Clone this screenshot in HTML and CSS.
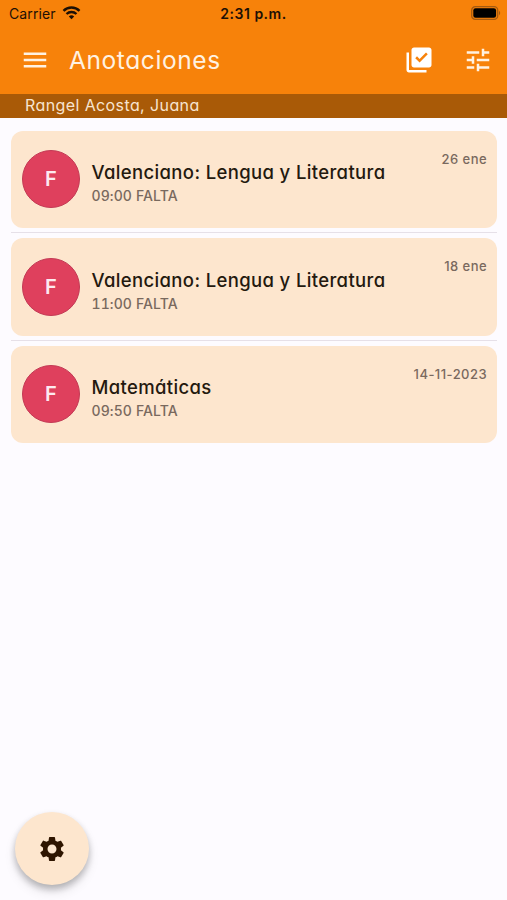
FILE: index.html
```html
<!DOCTYPE html>
<html lang="es">
<head>
    <meta charset="UTF-8">
    <meta name="viewport" content="width=device-width, initial-scale=1.0">
    <title>Anotaciones</title>
    <link rel="stylesheet" href="styles.css">
</head>
<body>
    <header>
        <div class="status-bar">
            <div class="carrier">
                <span>Carrier</span>
                <svg class="wifi" viewBox="0 0 18 14" fill="none" stroke="currentColor">
                    <path d="M1 4.8a11.5 11.5 0 0 1 16 0" stroke-width="2.5"/>
                    <path d="M4 8a7.2 7.2 0 0 1 10 0" stroke-width="2.4"/>
                    <path d="M9 13.3 6.3 10.5a3.9 3.9 0 0 1 5.4 0z" fill="currentColor" stroke="none"/>
                </svg>
            </div>
            <div class="time">2:31 p.m.</div>
            <svg class="battery" viewBox="0 0 30 14">
                <rect x=".7" y=".7" width="26" height="12.6" rx="3.6" fill="none" stroke="#a45a10" stroke-width="1.3"/>
                <rect x="2.3" y="2.3" width="22.8" height="9.4" rx="2.2"/>
                <path d="M28 4.8c1.6.7 1.6 3.7 0 4.4z" fill="#a45a10"/>
            </svg>
        </div>
        <div class="toolbar">
            <svg class="icon" viewBox="0 0 24 24"><path d="M3 18h18v-2H3v2zm0-5h18v-2H3v2zm0-7v2h18V6H3z"/></svg>
            <h1>Anotaciones</h1>
            <svg class="icon icon-check" viewBox="0 0 24 24"><path d="M20 2H8c-1.100 0-2 .9-2 2v12c0 1.100.9 2 2 2h12c1.100 0 2-.9 2-2V4c0-1.100-.9-2-2-2zm-7.530 12L9 10.500l1.400-1.410 2.070 2.080L17.600 6 19 7.410 12.470 14zM4 6H2v14c0 1.100.9 2 2 2h14v-2H4V6z"/></svg>
            <svg class="icon icon-tune" viewBox="0 0 24 24"><path d="M3 17v2h6v-2H3zM3 5v2h10V5H3zm10 16v-2h8v-2h-8v-2h-2v6h2zM7 9v2H3v2h4v2h2V9H7zm14 4v-2H11v2h10zm-6-4h2V7h4V5h-4V3h-2v6z"/></svg>
        </div>
        <div class="student">Rangel Acosta, Juana</div>
    </header>

    <main class="list">
        <div class="card">
            <div class="avatar">F</div>
            <div class="info">
                <h2>Valenciano: Lengua y Literatura</h2>
                <p>09:00 FALTA</p>
            </div>
            <div class="date">26 ene</div>
        </div>
        <div class="card">
            <div class="avatar">F</div>
            <div class="info">
                <h2>Valenciano: Lengua y Literatura</h2>
                <p>11:00 FALTA</p>
            </div>
            <div class="date">18 ene</div>
        </div>
        <div class="card">
            <div class="avatar">F</div>
            <div class="info">
                <h2>Matemáticas</h2>
                <p>09:50 FALTA</p>
            </div>
            <div class="date">14-11-2023</div>
        </div>
    </main>

    <button class="fab" aria-label="Ajustes">
        <svg class="icon" viewBox="0 0 24 24"><path d="M19.140 12.940c.04-.3.060-.61.060-.94 0-.32-.02-.64-.07-.94l2.030-1.580c.18-.14.230-.41.120-.61l-1.920-3.320c-.12-.22-.37-.29-.59-.22l-2.390.96c-.5-.38-1.030-.7-1.620-.94l-.36-2.540c-.04-.24-.24-.41-.48-.41h-3.840c-.24 0-.43.17-.47.41l-.36 2.540c-.59.24-1.130.57-1.620.94l-2.390-.96c-.22-.08-.47 0-.59.22L2.740 8.870c-.12.21-.08.47.12.61l2.030 1.580c-.05.3-.09.63-.09.94s.02.64.07.94l-2.030 1.580c-.18.14-.23.41-.12.61l1.920 3.320c.12.22.37.29.59.22l2.390-.96c.5.38 1.030.7 1.620.94l.36 2.540c.05.24.24.41.48.41h3.840c.24 0 .44-.17.47-.41l.36-2.540c.59-.24 1.130-.56 1.620-.94l2.390.96c.22.080.47 0 .59-.22l1.920-3.320c.12-.22.070-.47-.12-.61l-2.010-1.580zM12 15.600c-1.980 0-3.600-1.620-3.600-3.600s1.620-3.600 3.600-3.600 3.600 1.620 3.600 3.600-1.620 3.600-3.600 3.600z"/></svg>
    </button>
</body>
</html>
```
FILE: styles.css
```css
* {
    box-sizing: border-box;
}
body {
    margin: 0;
    min-height: 100vh;
    background-color: #fdfbff;
    font-family: Inter, "Open Sans", sans-serif;
    font-feature-settings: "cv11";
    white-space: nowrap;
}
h1, h2, p {
    margin: 0;
}
header {
    background-color: #f7820a;
}
.status-bar {
    display: grid;
    grid-template-columns: 1fr auto 1fr;
    align-items: center;
    height: 26px;
    padding: 0 6px 0 9px;
    font-size: 14px;
    color: #1d1005;
    font-feature-settings: normal;
}
.carrier {
    display: flex;
    align-items: center;
    gap: 6px;
    letter-spacing: 0.1px;
}
.wifi {
    width: 19px;
    height: 14px;
}
.time {
    margin-right: 3px;
    font-weight: 600;
    letter-spacing: 0.5px;
}
.battery {
    width: 30px;
    height: 14px;
    justify-self: end;
}
.toolbar {
    display: flex;
    align-items: center;
    height: 68px;
    padding: 0 14px 1px 20px;
    color: #fff2e2;
}
.icon {
    width: 30px;
    height: 30px;
    flex: none;
    fill: currentColor;
}
h1 {
    margin-left: 19px;
    font-size: 24.5px;
    font-weight: 400;
    letter-spacing: 0.6px;
}
.icon-check {
    margin-left: auto;
    color: #fff;
}
.icon-tune {
    margin-left: 29px;
}
.student {
    height: 24px;
    padding-left: 25px;
    background-color: #a95a07;
    color: #f7e4d0;
    font-size: 16px;
    font-weight: 400;
    line-height: 23px;
    letter-spacing: 0.4px;
}
.list {
    padding: 12.5px 10px 0 11px;
}
.card {
    display: flex;
    align-items: center;
    height: 97.5px;
    padding: 0 10px 0 11px;
    border-radius: 12px;
    background-color: #fde6ce;
}
/* hairline between two cards */
.card + .card {
    position: relative;
    margin-top: 10px;
}
.card + .card::before {
    content: "";
    position: absolute;
    top: -6px;
    left: 0;
    right: 0;
    height: 1px;
    background-color: #e6e0e8;
}
.avatar {
    display: flex;
    align-items: center;
    justify-content: center;
    width: 58px;
    height: 58px;
    flex: none;
    border: 1px solid #c33a55;
    border-radius: 50%;
    background-color: #df405d;
    color: #fdeaf0;
    font-size: 20px;
    font-weight: 600;
}
.info {
    margin-left: 11.5px;
    padding-top: 8px;
}
h2 {
    color: #24190f;
    font-size: 18.5px;
    font-weight: 500;
    line-height: 24px;
    letter-spacing: 0.36px;
}
.info p {
    margin-top: 1px;
    color: #79695e;
    font-size: 14px;
    font-weight: 450;
    font-feature-settings: "tnum";
    line-height: 21px;
    letter-spacing: 0.1px;
}
.date {
    align-self: flex-start;
    margin-left: auto;
    padding-top: 18px;
    color: #79695e;
    font-size: 13px;
    font-weight: 500;
    line-height: 20px;
    letter-spacing: 0.45px;
}
.fab {
    position: fixed;
    left: 15px;
    bottom: 15px;
    display: flex;
    align-items: center;
    justify-content: center;
    width: 74px;
    height: 73px;
    padding: 0;
    border: none;
    border-radius: 50%;
    background-color: #fde6ce;
    box-shadow: 0 4px 7px rgba(0, 0, 0, 0.24), 0 7px 12px rgba(0, 0, 0, 0.1);
    color: #2e1500;
}
```
